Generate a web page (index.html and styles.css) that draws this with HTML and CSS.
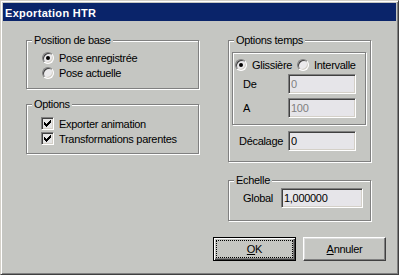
FILE: index.html
```html
<!DOCTYPE html>
<html>
    <head>
        <meta charset="utf-8" />
        <title>Exportation HTR</title>
        <link rel="stylesheet" href="styles.css">
    </head>
    <body>
        <div class="window">
            <div class="titlebar">Exportation HTR</div>
            <div class="client">
                <div class="columns">
                    <div class="col col-left">
                        <div class="group group-base">
                            <span class="group-title">Position de base</span>
                            <label class="option option-left"><span class="radio checked"></span>Pose enregistrée</label>
                            <label class="option option-left"><span class="radio"></span>Pose actuelle</label>
                        </div>
                        <div class="group group-options">
                            <span class="group-title">Options</span>
                            <label class="option option-check">
                                <span class="check"><svg width="7" height="7" viewBox="0 0 7 7"><path d="M0 2h1v3H0zM1 3h1v3H1zM2 4h1v3H2zM3 3h1v3H3zM4 2h1v3H4zM5 1h1v3H5zM6 0h1v3H6z" fill="#000"/></svg></span>Exporter animation
                            </label>
                            <label class="option option-check">
                                <span class="check"><svg width="7" height="7" viewBox="0 0 7 7"><path d="M0 2h1v3H0zM1 3h1v3H1zM2 4h1v3H2zM3 3h1v3H3zM4 2h1v3H4zM5 1h1v3H5zM6 0h1v3H6z" fill="#000"/></svg></span>Transformations parentes
                            </label>
                        </div>
                    </div>
                    <div class="col col-right">
                        <div class="group group-time">
                            <span class="group-title">Options temps</span>
                            <div class="subgroup">
                                <div class="radio-row">
                                    <label class="option option-wide"><span class="radio checked"></span>Glissière</label>
                                    <label class="option"><span class="radio"></span>Intervalle</label>
                                </div>
                                <div class="field field-range">
                                    <span class="field-label">De</span>
                                    <input class="edit" value="0" disabled>
                                </div>
                                <div class="field field-range field-next">
                                    <span class="field-label">A</span>
                                    <input class="edit" value="100" disabled>
                                </div>
                            </div>
                            <div class="field field-offset">
                                <span class="field-label">Décalage</span>
                                <input class="edit" value="0">
                            </div>
                        </div>
                        <div class="group group-scale">
                            <span class="group-title">Echelle</span>
                            <div class="field field-scale">
                                <span class="field-label">Global</span>
                                <input class="edit edit-wide" value="1,000000">
                            </div>
                        </div>
                    </div>
                </div>
                <div class="buttons">
                    <button class="btn btn-default"><u>O</u>K</button>
                    <button class="btn"><u>A</u>nnuler</button>
                </div>
            </div>
        </div>
    </body>
</html>
```

FILE: styles.css
```css
body {
    margin: 0;
    font-family: "Liberation Sans", Arial, sans-serif;
    font-size: 11px;
    letter-spacing: -0.3px;
    color: #000;
}

.window {
    box-sizing: border-box;
    width: 399px;
    height: 275px;
    padding: 2px;
    background: #c5c6c2;
    border: 1px solid;
    border-color: #d4d0c8 #404040 #404040 #d4d0c8;
    box-shadow: inset 1px 1px #fff, inset -1px -1px #808080;
}

.titlebar {
    height: 18px;
    line-height: 18px;
    padding: 1px 0 0 2px;
    box-sizing: border-box;
    background: #0a246a;
    color: #fff;
    font-weight: bold;
    letter-spacing: 0.3px;
}

.columns {
    display: flex;
    gap: 29px;
    margin-top: 19px;
    padding-left: 23px;
}

.col-left {
    width: 173px;
}

.col-right {
    width: 143px;
}

.group {
    position: relative;
    box-sizing: border-box;
    border: 1px solid #808080;
    box-shadow: inset 1px 1px #fff, 1px 1px #fff;
}

.group-title {
    position: absolute;
    top: -7px;
    left: 5px;
    padding: 0 2px;
    line-height: 13px;
    background: #c5c6c2;
    white-space: nowrap;
}

.group-base {
    height: 49px;
    padding-top: 9px;
}

.group-options {
    height: 50px;
    margin-top: 15px;
    padding-top: 11px;
}

.option {
    display: flex;
    align-items: center;
    height: 15px;
    white-space: nowrap;
}

.option-left {
    padding-left: 15px;
}

.option-check {
    padding-left: 14px;
}

.option-wide {
    width: 62px;
    flex-shrink: 0;
}

.radio {
    box-sizing: border-box;
    width: 12px;
    height: 12px;
    flex-shrink: 0;
    margin-right: 5px;
    border-radius: 50%;
    border: 1px solid;
    border-color: #808080 #fff #fff #808080;
    box-shadow: inset 1px 1px #404040, inset -1px -1px #d4d0c8;
    background: #ebeaec;
    display: flex;
    align-items: center;
    justify-content: center;
}

.radio.checked::after {
    content: "";
    width: 4px;
    height: 4px;
    border-radius: 50%;
    background: #000;
}

.check {
    box-sizing: border-box;
    width: 13px;
    height: 13px;
    flex-shrink: 0;
    margin-right: 5px;
    border: 1px solid;
    border-color: #808080 #fff #fff #808080;
    box-shadow: inset 1px 1px #404040, inset -1px -1px #d4d0c8;
    background: #e6e6e6;
    display: flex;
    align-items: center;
    justify-content: center;
}

.check svg {
    display: block;
    shape-rendering: crispEdges;
}

.group-time {
    height: 122px;
    padding-top: 11px;
}

.subgroup {
    box-sizing: border-box;
    width: 134px;
    height: 73px;
    margin-left: 3px;
    padding-top: 4px;
    border: 1px solid #808080;
    box-shadow: inset 1px 1px #fff, 1px 1px #fff;
}

.radio-row {
    display: flex;
    padding-left: 2px;
}

.field {
    display: flex;
    align-items: center;
    height: 20px;
}

.field-range {
    margin-top: 2px;
    padding-left: 10px;
}

.field-range .field-label {
    width: 45px;
}

.field-next {
    margin-top: 4px;
}

.field-offset {
    margin-top: 6px;
    padding-left: 10px;
}

.field-offset .field-label {
    width: 49px;
}

.group-scale {
    height: 41px;
    margin-top: 18px;
    padding-top: 7px;
}

.field-scale {
    padding-left: 14px;
}

.field-scale .field-label {
    width: 38px;
}

.field-label {
    flex-shrink: 0;
}

.edit {
    box-sizing: border-box;
    width: 68px;
    height: 20px;
    margin: 0;
    padding: 0 0 0 2px;
    font: inherit;
    letter-spacing: inherit;
    color: #000;
    background: #e6e5e9;
    border: 1px solid;
    border-color: #808080 #fff #fff #808080;
    box-shadow: inset 1px 1px #404040, inset -1px -1px #d4d0c8;
    outline: none;
}

.edit:disabled {
    color: #808080;
    -webkit-text-fill-color: #808080;
    opacity: 1;
}

.edit-wide {
    width: 82px;
}

.buttons {
    display: flex;
    justify-content: flex-end;
    gap: 7px;
    margin-top: 16px;
    padding-right: 10px;
}

.btn {
    position: relative;
    box-sizing: border-box;
    width: 83px;
    height: 24px;
    margin: 0;
    padding: 0;
    font: inherit;
    letter-spacing: inherit;
    color: #000;
    background: #c5c6c2;
    border: 1px solid;
    border-color: #fff #404040 #404040 #fff;
    box-shadow: inset -1px -1px #808080, inset 1px 1px #dcdcdc;
}

.btn-default {
    border-color: #000;
    box-shadow: inset 1px 1px #fff, inset -1px -1px #404040, inset -2px -2px #808080;
}

.btn-default::after {
    content: "";
    position: absolute;
    top: 2px;
    left: 2px;
    right: 2px;
    bottom: 2px;
    border: 1px dotted #000;
}
```
